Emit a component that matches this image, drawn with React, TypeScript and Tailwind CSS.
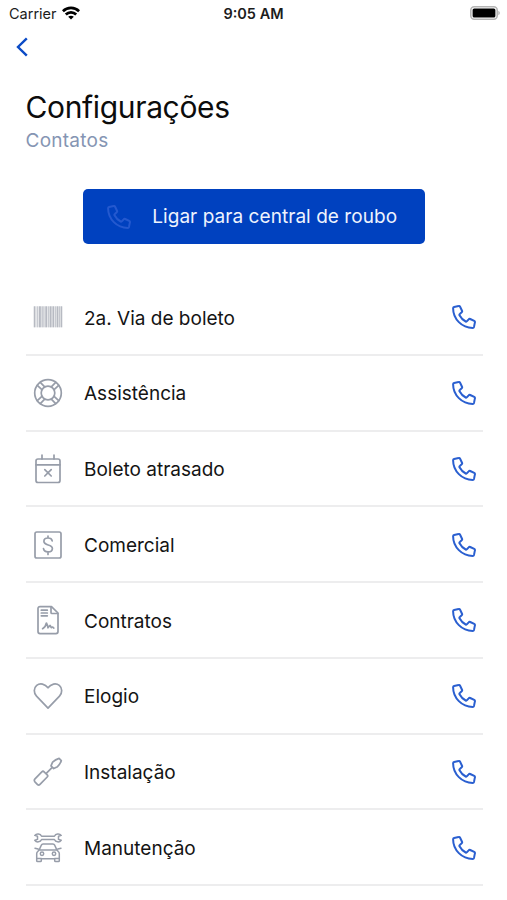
import type { ReactNode } from "react";

type Contact = {
  label: string;
  icon: ReactNode;
};

const barcodeBars = [
  [0, 1.4],
  [3.2, 0.6],
  [5.2, 1.8],
  [8, 0.8],
  [9.8, 0.6],
  [11.6, 1.6],
  [14.4, 0.6],
  [16, 1.6],
  [18.8, 1.4],
  [21.2, 0.6],
  [23, 1.4],
  [25.2, 0.7],
  [27, 1.4],
];

function Glyph({ children }: { children: ReactNode }) {
  return (
    <svg
      viewBox="0 0 30 30"
      className="w-[30px] h-[30px] shrink-0 text-[#979da9]"
      fill="none"
      stroke="currentColor"
      strokeWidth="1.7"
      strokeLinecap="round"
      strokeLinejoin="round"
    >
      {children}
    </svg>
  );
}

function Phone({ className }: { className: string }) {
  return (
    <svg
      viewBox="0 0 24 24"
      className={className}
      fill="none"
      stroke="currentColor"
      strokeWidth="2"
      strokeLinejoin="round"
    >
      <path d="M2.1 2 6.6 1.1c.7-.2 1.2.1 1.5.7l1.9 4c.3.6.2 1.1-.3 1.5L7.8 9c-.5.4-.5.8-.3 1.3 1.4 2.7 3.5 4.8 6.2 6.2.5.2.9.2 1.3-.3l1.7-1.9c.4-.5.9-.6 1.5-.3l4 1.9c.6.3.9.8.7 1.5l-.9 4.5c-.2.7-.6 1-1.3 1C9.9 22.9 1.1 14.1 1.1 3.3c0-.7.3-1.1 1-1.3z" />
    </svg>
  );
}

const contacts: Contact[] = [
  {
    label: "2a. Via de boleto",
    icon: (
      <Glyph>
        <g fill="currentColor" stroke="none">
          <rect x="0.8" y="4.3" width="28.4" height="21" opacity=".25" />
          {barcodeBars.map(([x, w]) => (
            <rect key={x} x={x + 0.8} y="4.3" width={w} height="21" opacity=".6" />
          ))}
        </g>
      </Glyph>
    ),
  },
  {
    label: "Assistência",
    icon: (
      <Glyph>
        <circle cx="15" cy="15" r="13.3" />
        <circle cx="15" cy="15" r="6.8" />
        <path d="m4.3 7.3 4.6 4.4M7.3 4.3l4.4 4.6M22.7 4.3l-4.4 4.6M25.7 7.3l-4.6 4.4M25.7 22.7l-4.6-4.4M22.7 25.7l-4.4-4.6M7.3 25.7l4.4-4.6M4.3 22.7l4.6-4.4" />
      </Glyph>
    ),
  },
  {
    label: "Boleto atrasado",
    icon: (
      <Glyph>
        <rect x="3" y="5" width="24" height="23.5" rx="2" />
        <path d="M3 10.8h24M9 5V1M21 5V1M11.8 15.6l6.4 6.4M18.2 15.6 11.8 22" />
      </Glyph>
    ),
  },
  {
    label: "Comercial",
    icon: (
      <Glyph>
        <rect x="2" y="2" width="26" height="26" rx="1.8" />
        <path d="M19.2 10.8c-.3-1.6-1.8-2.8-4.2-2.8-2.3 0-4.1 1.2-4.1 3.3 0 4.8 8.5 2.6 8.5 7.2 0 2.1-1.9 3.4-4.4 3.4-2.4 0-4.2-1.2-4.5-3.2M15 6v2M15 22v2.4" />
      </Glyph>
    ),
  },
  {
    label: "Contratos",
    icon: (
      <Glyph>
        <path d="M18.5 1.6H7a2 2 0 0 0-2 2v23a2 2 0 0 0 2 2h16a2 2 0 0 0 2-2V8z" />
        <path d="M18 1.8v5.7a1 1 0 0 0 1 1h5.8M8.3 5.2h6M8.3 8h6M8.3 10.8h6M9.6 23.7c2-1.2 3.4-3.4 3.8-5.7.9 1.6 1.4 3 1.6 4.8.7-.8 1.3-1.7 2.1-2.3.5.7.8 1.5 1.3 2.1.5-.4.8-.6 1.2-.5.5.2.6.9 1.2 1" />
      </Glyph>
    ),
  },
  {
    label: "Elogio",
    icon: (
      <Glyph>
        <path d="M15 27.1 3.5 15.2C.5 12 .6 7 3.7 4.4 7 1.7 12 2.7 15 6.8c3-4.1 8-5.1 11.3-2.4 3.1 2.6 3.2 7.6.2 10.8z" />
      </Glyph>
    ),
  },
  {
    label: "Instalação",
    icon: (
      <Glyph>
        <path d="m2 21.8 6.8-7c.8-.7 1.6-.7 2.3 0l3.1 3c.7.7.7 1.5 0 2.2l-7.2 7.4c-.7.7-1.5.9-2.2.4l-2.9-3c-.6-.8-.6-2.3.1-3zM13 16.6l6-6M18 8.9l1.6-3.8c2-1.8 4.2-3 6.5-3.7l2.2 2.2c-.8 2.3-2 4.4-3.8 6.1l-3.8 1.9z" />
      </Glyph>
    ),
  },
  {
    label: "Manutenção",
    icon: (
      <Glyph>
        <g strokeWidth="1.5">
          <path d="M8.6 3.2h12.8C22.6.6 26.4 0 28.2 2.4l-2.7.8v3.2l2.7.9c-1.8 2.5-5.6 1.9-6.8-.8H8.6C7.4 9.2 3.6 9.8 1.8 7.3l2.7-.9V3.2l-2.7-.8C3.6 0 7.4.6 8.6 3.2z" />
          <path d="m6.2 16.9 2-4.5c.4-1 .9-1.5 1.9-1.5h9.8c1 0 1.5.5 1.9 1.5l2 4.5zM6.2 16.9l-1.5 1.6c-.7.7-1 1.3-1 2.2v7c0 .5.4.9.9.9h2.8c.5 0 .9-.4.9-.9v-2h13.4v2c0 .5.4.9.9.9h2.8c.5 0 .9-.4.9-.9v-7c0-.9-.3-1.5-1-2.2l-1.5-1.6M3.7 25.5h4.6M21.7 25.5h4.6M2 15.2l3.1.7M28 15.2l-3.1.7" />
          <circle cx="9" cy="20.8" r="1.7" />
          <circle cx="21" cy="20.8" r="1.7" />
        </g>
      </Glyph>
    ),
  },
];

function StatusBar() {
  return (
    <div className="grid grid-cols-3 items-center h-7 pl-[9px] pr-[7px] text-[#1c1c1c]">
      <div className="flex items-center gap-[5px]">
        <span className="text-[14.5px] leading-none">Carrier</span>
        <svg viewBox="0 0 18 14" className="w-[18px] h-[14px] -mt-0.5" fill="none" stroke="black" strokeWidth="2.7">
          <path d="M.9 5.2c4.5-4.4 11.7-4.4 16.2 0M3.8 8.5c2.9-2.9 7.5-2.9 10.4 0" />
          <path d="M9 13.6 6.2 10.8c1.5-1.5 4.1-1.5 5.6 0z" fill="black" stroke="none" />
        </svg>
      </div>
      <span className="-ml-0.5 text-center text-[14.5px] leading-none font-semibold">9:05 AM</span>
      <svg viewBox="0 0 30 14" className="w-[30px] h-[14px] justify-self-end -mt-0.5">
        <rect x=".8" y=".8" width="26.4" height="12.4" rx="3.4" fill="white" stroke="#b5b5b5" strokeWidth="1.6" />
        <rect x="2.6" y="2.5" width="22.8" height="9" rx="1.6" fill="black" />
        <path d="M28.3 4.8c2 .8 2 3.6 0 4.4z" fill="#b5b5b5" />
      </svg>
    </div>
  );
}

export default function App() {
  return (
    <div className="w-full h-screen overflow-hidden bg-white font-['Inter',sans-serif] text-[#141414]">
      <StatusBar />

      <button className="block pl-4 pt-[9px]" aria-label="Voltar">
        <svg viewBox="0 0 12 20" className="w-3 h-5" fill="none" stroke="#0b4bc6" strokeWidth="2.4">
          <path d="M10.8 1.3 2 10l8.8 8.7" />
        </svg>
      </button>

      <div className="pl-[25.5px] pr-6">
        <h1 className="mt-[31px] text-[30px] leading-[38px] tracking-[-0.35px] text-[#0c0c0c]">Configurações</h1>
        <p className="pt-px text-[19px] leading-[27px] tracking-[0.25px] text-[#8595b3]">Contatos</p>

        {/* Theft hotline */}
        <button className="flex items-center mt-[35px] mx-auto w-[342px] h-[55px] pl-6 rounded-[5px] bg-[#0041bf] text-[19px] text-[#eef3fd]">
          <Phone className="w-6 h-6 mr-[21px] text-[#2459cf]" />
          <span className="pt-0.5 whitespace-nowrap tracking-[0.05px]">Ligar para central de roubo</span>
        </button>

        <ul className="mt-[36px]">
          {contacts.map((contact) => (
            <li
              key={contact.label}
              className="flex items-center h-[75.75px] pl-[7.5px] pr-[7px] pt-px border-b-2 border-[#ededee]"
            >
              {contact.icon}
              <span className="ml-[21px] pt-[3px] text-[19px]">{contact.label}</span>
              <Phone className="w-6 h-6 ml-auto text-[#2a5fd0]" />
            </li>
          ))}
        </ul>
      </div>
    </div>
  );
}
